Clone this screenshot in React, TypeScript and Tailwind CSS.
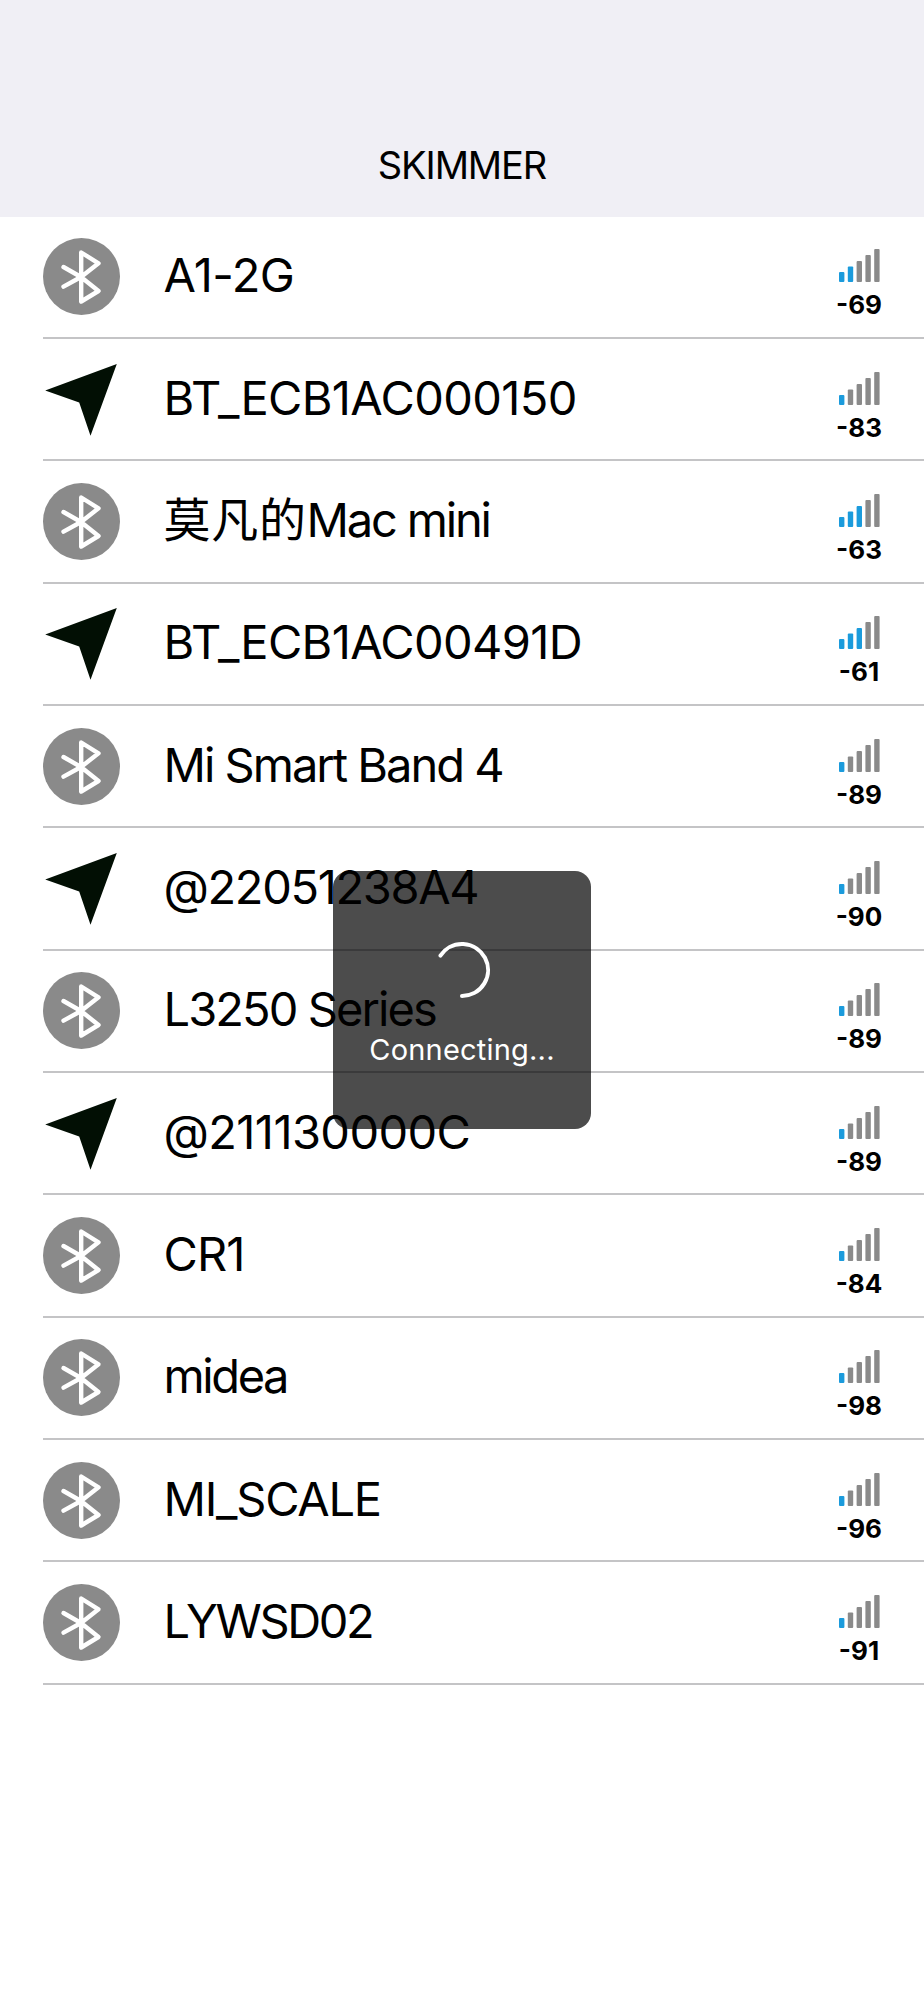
type Device = {
  name: string
  rssi: number
  bars: number
  type: "bluetooth" | "arrow"
  tracking: string
  prefix?: string
}

const devices: Device[] = [
  { name: "A1-2G", rssi: -69, bars: 2, type: "bluetooth", tracking: "tracking-[-0.6px]" },
  { name: "BT_ECB1AC000150", rssi: -83, bars: 1, type: "arrow", tracking: "tracking-[-0.63px]" },
  { prefix: "莫凡的", name: "Mac mini", rssi: -63, bars: 3, type: "bluetooth", tracking: "tracking-[-2.2px]" },
  { name: "BT_ECB1AC00491D", rssi: -61, bars: 3, type: "arrow", tracking: "tracking-[-0.65px]" },
  { name: "Mi Smart Band 4", rssi: -89, bars: 1, type: "bluetooth", tracking: "tracking-[-2px]" },
  { name: "@22051238A4", rssi: -90, bars: 1, type: "arrow", tracking: "tracking-[-1.35px]" },
  { name: "L3250 Series", rssi: -89, bars: 1, type: "bluetooth", tracking: "tracking-[-1.9px]" },
  { name: "@211130000C", rssi: -89, bars: 1, type: "arrow", tracking: "tracking-[-0.6px]" },
  { name: "CR1", rssi: -84, bars: 1, type: "bluetooth", tracking: "tracking-[-0.9px]" },
  { name: "midea", rssi: -98, bars: 1, type: "bluetooth", tracking: "tracking-[-2.4px]" },
  { name: "MI_SCALE", rssi: -96, bars: 1, type: "bluetooth", tracking: "tracking-[-1.25px]" },
  { name: "LYWSD02", rssi: -91, bars: 1, type: "bluetooth", tracking: "tracking-[-2.4px]" },
]

function BluetoothIcon() {
  return (
    <svg viewBox="0 0 77 77" className="w-[77px] h-[77px] shrink-0">
      <circle cx="38.5" cy="38.5" r="38.5" fill="#8a8a8a" />
      <path
        d="M20.5 29 L38 39 L55.5 53 L38.2 63.5 V14.5 L55.5 25.3 L38 39 L20.5 48.7"
        fill="none"
        stroke="#fff"
        strokeWidth="4.4"
        strokeLinecap="round"
        strokeLinejoin="round"
      />
    </svg>
  )
}

function ArrowIcon() {
  return (
    <svg viewBox="0 0 77 77" className="w-[77px] h-[77px] shrink-0">
      <path d="M2.2 29.5 L73.8 2.9 L47.5 74.8 L36.2 41.5 Z" fill="#020f04" />
    </svg>
  )
}

function SignalBars({ bars }: { bars: number }) {
  const heights = [10, 15.5, 21, 27, 33]
  return (
    <svg viewBox="0 0 41 33" className="w-[41px] h-[33px]">
      {heights.map((h, i) => (
        <rect
          key={i}
          x={i * 8.8}
          y={33 - h}
          width="5.4"
          height={h}
          rx="1"
          fill={i < bars ? "#1b9bdc" : "#8a8a8a"}
        />
      ))}
    </svg>
  )
}

function DeviceRow({ device }: { device: Device }) {
  return (
    <div className="flex items-center h-[122.35px] ml-[43px] pr-[25px] border-b-2 border-[#c4c4c6]">
      {device.type === "bluetooth" ? <BluetoothIcon /> : <ArrowIcon />}
      <div className="flex-1 ml-[43.5px] pb-1 text-[47px] leading-none text-black whitespace-nowrap">
        {device.prefix && <span className="tracking-[0.7px]">{device.prefix}</span>}
        <span className={device.tracking}>{device.name}</span>
      </div>
      <div className="flex flex-col items-center w-20 pt-[15px]">
        <SignalBars bars={device.bars} />
        <span className="mt-[9px] text-[26px] leading-7 font-bold text-black">{device.rssi}</span>
      </div>
    </div>
  )
}

export default function App() {
  return (
    <div className="relative min-h-[2000px] bg-white overflow-hidden font-['Inter','Noto_Sans_CJK_SC',sans-serif]">
      {/* header */}
      <header className="h-[216.5px] bg-[#f0eff5] flex items-end justify-center pb-8">
        <h1 className="text-[38px] leading-10 tracking-[-1.1px] text-black">SKIMMER</h1>
      </header>

      {/* device list */}
      <main>
        {devices.map((device) => (
          <DeviceRow key={device.name} device={device} />
        ))}
      </main>

      {/* connecting hud */}
      <div className="absolute inset-0 flex items-center justify-center">
        <div className="w-[258px] h-[258px] rounded-2xl bg-black/70 flex flex-col items-center pt-[70px]">
          <svg viewBox="0 0 58 58" className="w-[58px] h-[58px]">
            <path
              d="M7.4 14.6 A26 26 0 1 1 29 55"
              fill="none"
              stroke="#fff"
              strokeWidth="4"
              strokeLinecap="round"
            />
          </svg>
          <span className="mt-[33px] text-[29px] leading-9 tracking-[0.2px] text-white">Connecting...</span>
        </div>
      </div>
    </div>
  )
}
